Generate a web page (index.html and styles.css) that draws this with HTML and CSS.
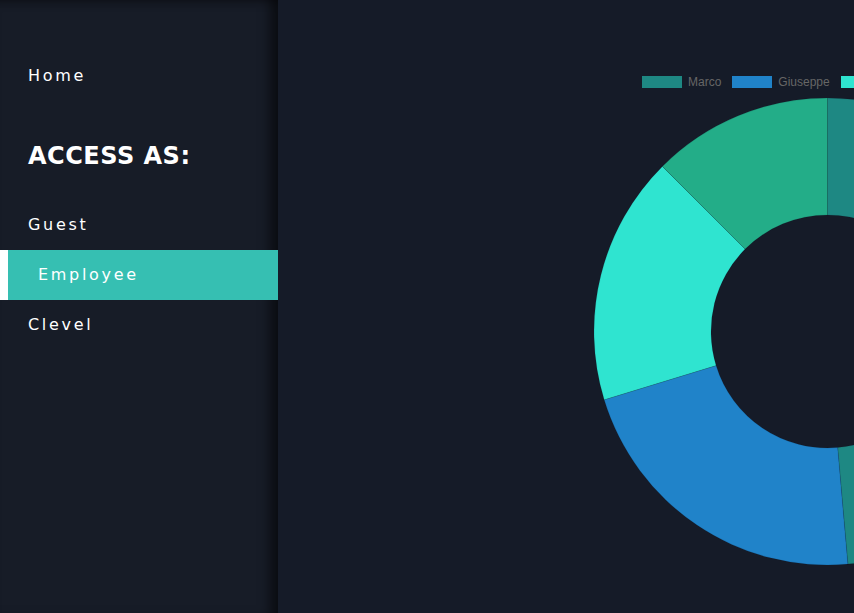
FILE: index.html
```html
<!DOCTYPE html>
<html lang="en">
<head>
    <meta charset="UTF-8">
    <meta name="viewport" content="width=device-width, initial-scale=1.0">
    <title>Dashboard</title>
    <link rel="stylesheet" href="styles.css">
</head>
<body>
    <nav class="sidebar">
        <a class="nav-link home" href="#">Home</a>
        <h2 class="access-title">ACCESS AS:</h2>
        <a class="nav-link" href="#">Guest</a>
        <a class="nav-link active" href="#">Employee</a>
        <a class="nav-link" href="#">Clevel</a>
    </nav>
    <main class="content">
        <div class="legend">
            <span class="legend-item"><i class="swatch marco"></i>Marco</span>
            <span class="legend-item"><i class="swatch giuseppe"></i>Giuseppe</span>
            <span class="legend-item"><i class="swatch luca"></i></span>
        </div>
        <div class="chart">
            <svg width="467" height="467" viewBox="0 0 467 467">
                <path class="seg marco" d="M233.5 0 A233.5 233.5 0 0 1 253.85 466.11 L243.65 349.56 A116.5 116.5 0 0 0 233.5 117 Z"/>
                <path class="seg giuseppe" d="M253.85 466.11 A233.5 233.5 0 0 1 10.2 301.77 L122.09 267.56 A116.5 116.5 0 0 0 243.65 349.56 Z"/>
                <path class="seg luca" d="M10.2 301.77 A233.5 233.5 0 0 1 68.39 68.39 L151.12 151.12 A116.5 116.5 0 0 0 122.09 267.56 Z"/>
                <path class="seg anna" d="M68.39 68.39 A233.5 233.5 0 0 1 233.5 0 L233.5 117 A116.5 116.5 0 0 0 151.12 151.12 Z"/>
            </svg>
        </div>
    </main>
</body>
</html>
```

FILE: styles.css
```css
html, body {
    margin: 0;
    padding: 0;
    height: 100%;
}

body {
    display: flex;
    background-color: #151b28;
    overflow: hidden;
    font-family: 'DejaVu Sans', sans-serif;
}

.sidebar {
    width: 278px;
    flex-shrink: 0;
    height: 100%;
    background-color: #171c27;
    box-shadow: inset -14px 0 12px -6px rgba(0, 0, 0, 0.55), inset 0 10px 10px -8px rgba(0, 0, 0, 0.35);
    display: flex;
    flex-direction: column;
    padding-top: 51px;
    box-sizing: border-box;
}

.nav-link {
    display: block;
    height: 50px;
    line-height: 50px;
    padding-left: 28px;
    color: #fff;
    text-decoration: none;
    font-size: 16px;
    letter-spacing: 2.7px;
}

.access-title {
    margin: 0;
    padding: 40px 0 29px 28px;
    color: #fff;
    font-size: 24px;
    font-weight: bold;
    line-height: 30px;
    letter-spacing: 0.5px;
}

.nav-link.active {
    background-color: #36bfb2;
    border-left: 8px solid #fff;
    padding-left: 30px;
}

.content {
    flex: 1;
    padding-top: 76px;
    overflow: hidden;
    min-width: 0;
}

.legend {
    display: flex;
    gap: 11px;
    margin-left: 364px;
    height: 12px;
    white-space: nowrap;
}

.legend-item {
    display: flex;
    align-items: center;
    font-family: 'Liberation Sans', Arial, sans-serif;
    font-size: 12px;
    color: #666;
}

.swatch {
    display: inline-block;
    width: 40px;
    height: 12px;
    margin-right: 6px;
}

.chart {
    margin-top: 10px;
    margin-left: 316px;
    width: 467px;
}

.chart svg {
    display: block;
}

.seg {
    stroke: rgba(10, 20, 30, 0.2);
    stroke-width: 0.6;
}

.marco { background-color: #1e8883; fill: #1e8883; }
.giuseppe { background-color: #2083c9; fill: #2083c9; }
.luca { background-color: #2fe4d0; fill: #2fe4d0; }
.anna { background-color: #23ad88; fill: #23ad88; }
```
